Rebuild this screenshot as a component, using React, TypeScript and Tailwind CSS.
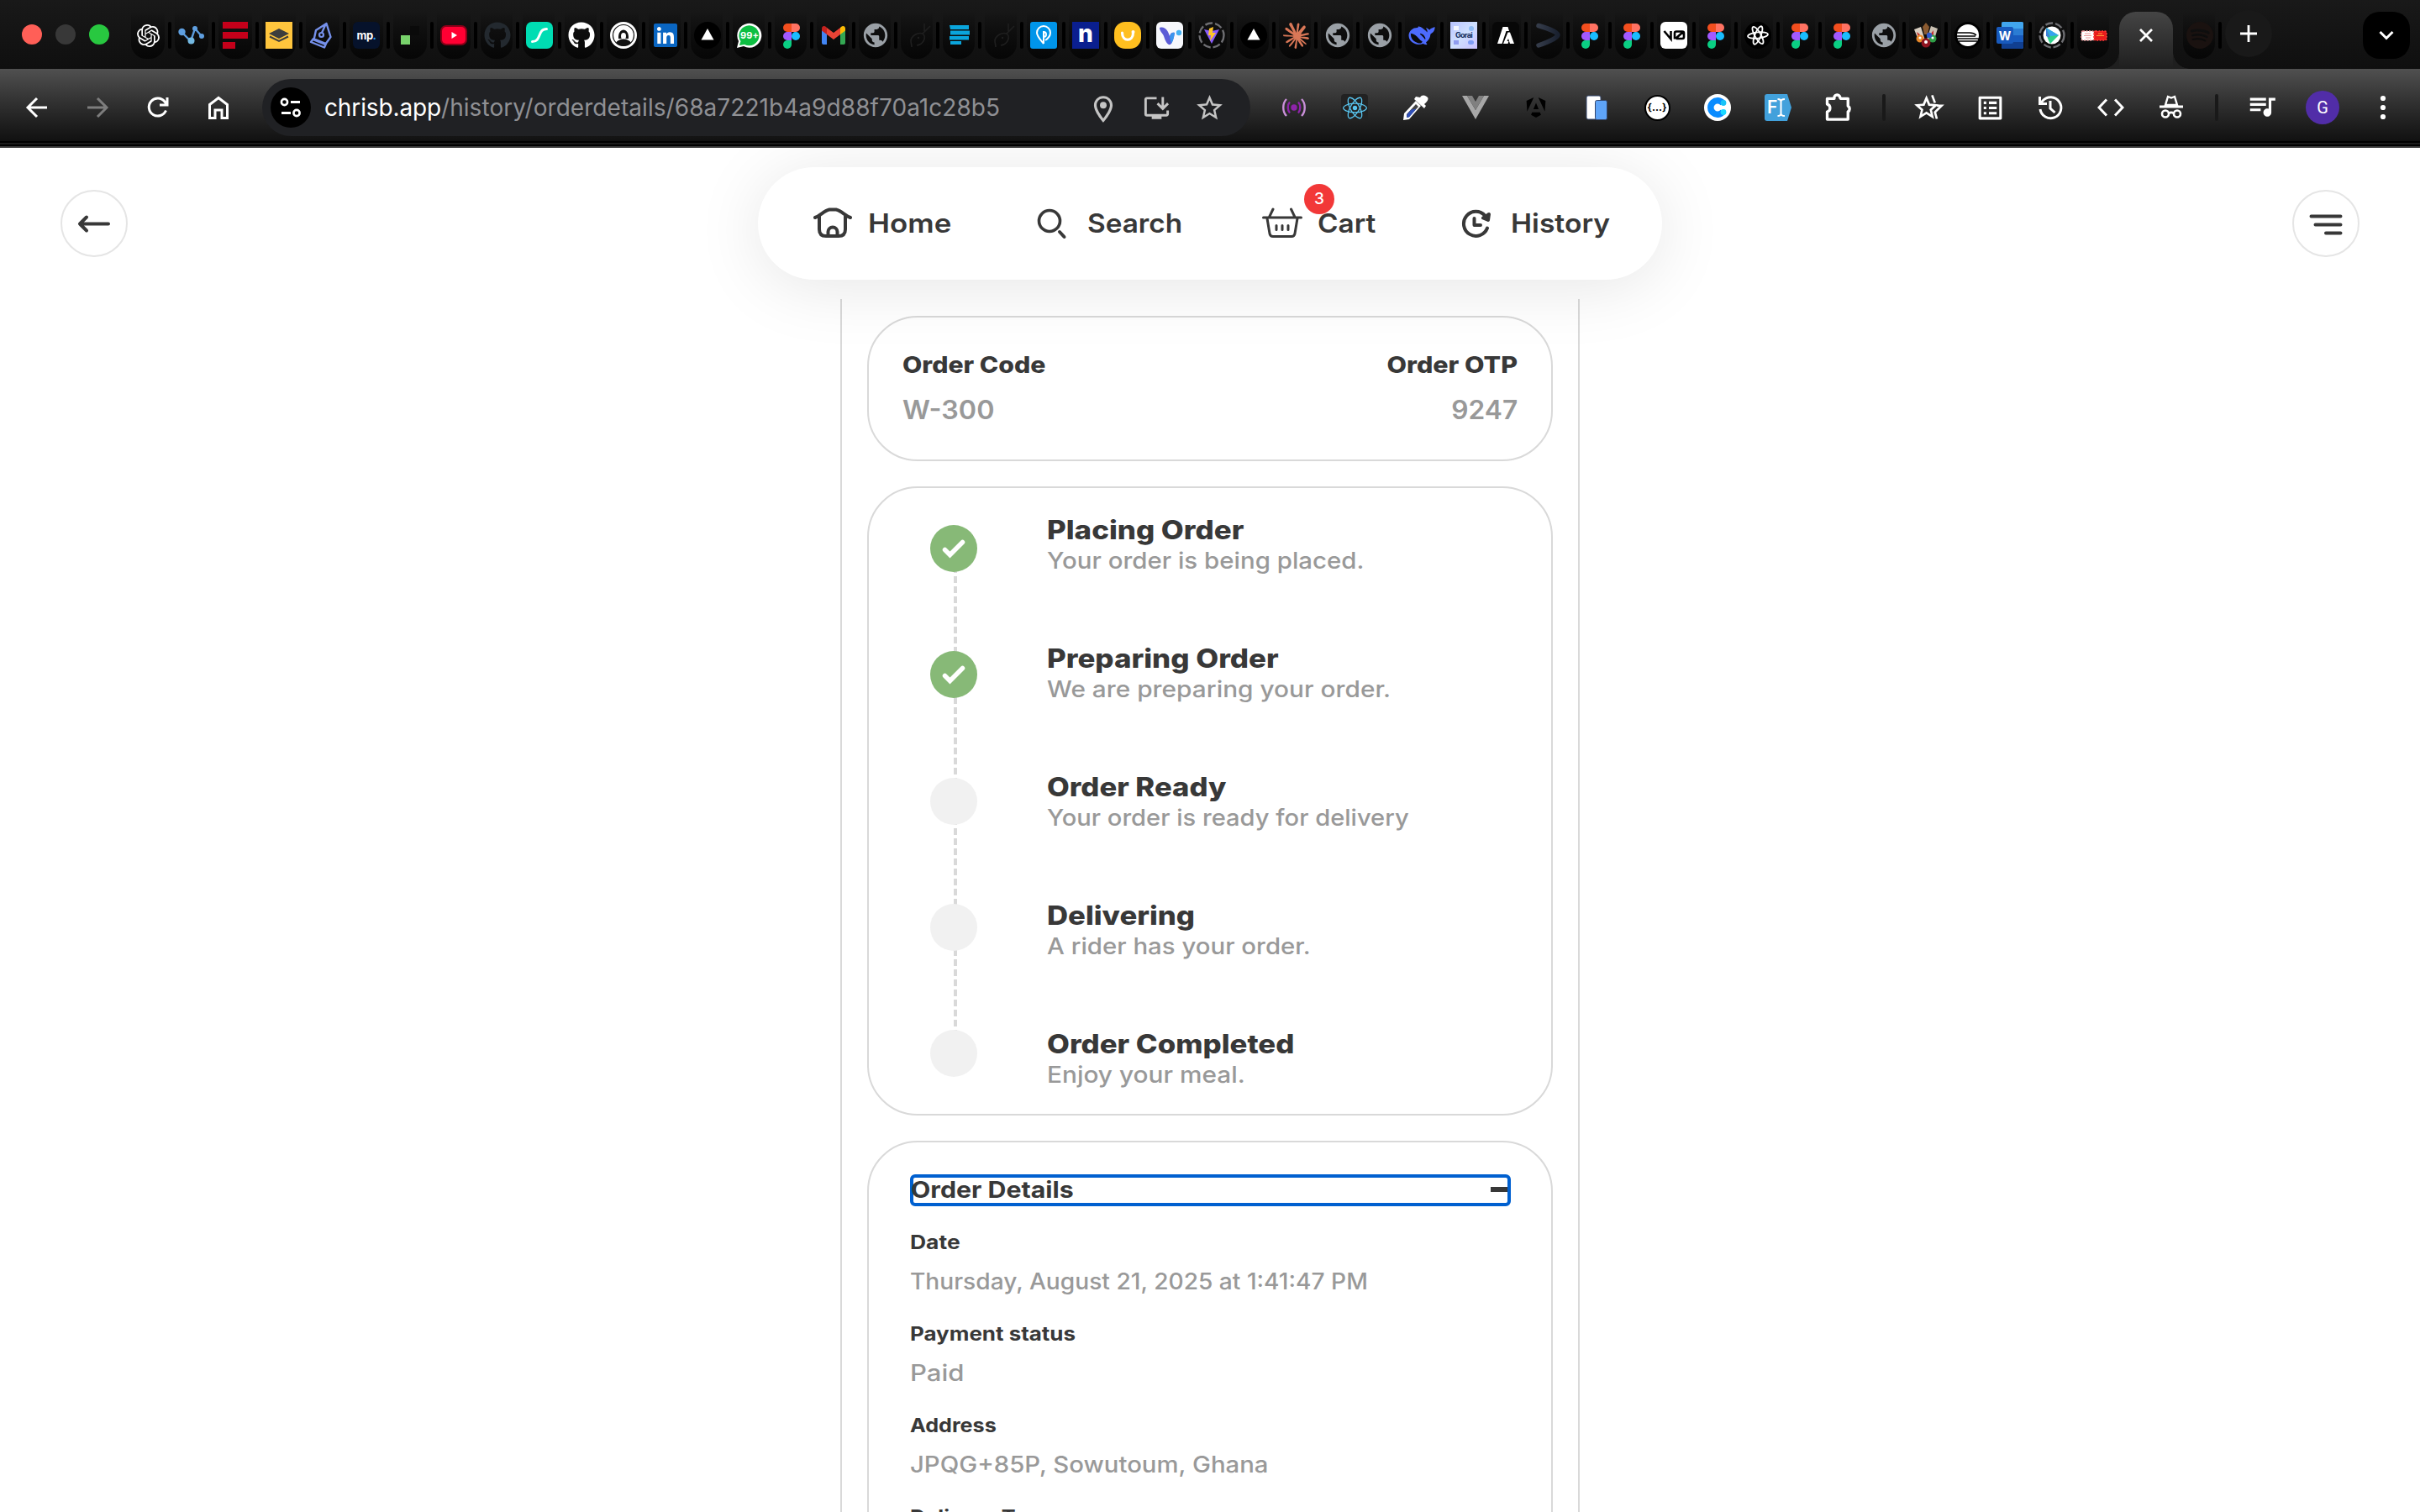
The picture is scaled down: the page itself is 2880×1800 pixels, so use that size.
import type { ReactNode } from "react";
import { SiOpenai, SiClaude, SiSpotify, SiAngular, SiReact } from "react-icons/si";
import { FaGithub, FaLinkedin } from "react-icons/fa";
import {
  MdOutlineListAlt,
  MdQueueMusic,
  MdOutlineLocationOn,
  MdOutlineInstallDesktop,
  MdOutlineStarBorder,
  MdPublic,
} from "react-icons/md";

/* ---------- favicons ---------- */

function Fav({ children }: { children: ReactNode }) {
  return (
    <svg viewBox="0 0 32 32" className="h-8 w-8 shrink-0" fill="none">
      {children}
    </svg>
  );
}

const Figma = () => (
  <Fav>
    <path d="M6 7a5 5 0 0 1 5-5h5v10h-5a5 5 0 0 1-5-5Z" fill="#f24e1e" />
    <path d="M16 2h5a5 5 0 0 1 0 10h-5Z" fill="#ff7262" />
    <path d="M6 17a5 5 0 0 1 5-5h5v10h-5a5 5 0 0 1-5-5Z" fill="#a259ff" />
    <circle cx="21" cy="17" r="5" fill="#1abcfe" />
    <path d="M6 27a5 5 0 0 1 5-5h5v5a5 5 0 0 1-10 0Z" fill="#0acf83" />
  </Fav>
);
const Globe = () => <MdPublic className="h-[34px] w-[34px] shrink-0 text-[#9aa0a6]" />;
const Triangle = () => (
  <Fav>
    <circle cx="16" cy="16" r="16" fill="#000" />
    <path d="M16 8l7.5 13.5h-15Z" fill="#fff" />
  </Fav>
);
const Rabbit = () => (
  <Fav>
    <path d="M24 2v9M31 5l-9 9M22 14c5 4 1 13-7 14M22 14c-6-2-14 3-14 9 0 2 1 4 1 7" stroke="#1f1f1f" strokeWidth="1.6" />
    <circle cx="17" cy="19" r="1.2" fill="#1f1f1f" />
  </Fav>
);
const Nodes = () => (
  <Fav>
    <path d="M4 12l11 11L20 8l8 9" stroke="#5b9bdc" strokeWidth="2.4" />
    <circle cx="4.5" cy="12" r="4.2" fill="#5f9fe0" />
    <circle cx="15.500" cy="22.500" r="4" fill="#74b9e2" />
    <circle cx="20" cy="8" r="3" fill="#5f9fe0" />
    <circle cx="28" cy="17" r="3" fill="#5f9fe0" />
  </Fav>
);
const RedBars = () => (
  <Fav>
    <path d="M1 0h30v8H1ZM1 12h30v8H1ZM1 24h15v8H1Z" fill="#c4001a" />
  </Fav>
);
const Layers = () => (
  <Fav>
    <path d="M0 0h32v32H0Z" fill="#ffc53d" />
    <path d="M16 8l12 6-12 6L4 14Z" fill="#3d3d3d" />
    <path d="M5 17.500l11 5.500 11-5.500" stroke="#3d3d3d" strokeWidth="2" />
  </Fav>
);
const Pen = () => (
  <Fav>
    <path d="M20.500 2L8 10 5.500 21.500 19 27l6.500-9ZM19.500 3l-4.500 10M2 24l3-4 15 6-2 4.500Z" stroke="#7590ea" strokeWidth="2.4" strokeLinejoin="round" />
    <circle cx="14.500" cy="15.500" r="2.500" stroke="#7590ea" strokeWidth="2.200" />
  </Fav>
);
const Mp = () => (
  <div className="relative flex h-8 w-8 items-center justify-center rounded-md bg-[#06122b] font-['Inter'] text-[13px] leading-none font-bold tracking-[-0.500px] text-white">
    mp<span className="text-[#1ea0ff]">.</span>
  </div>
);
const Pixels = () => (
  <Fav>
    <path d="M5 16h11v11H5Z" fill="#78d26b" />
    <path d="M16 5h11v11H16Z" fill="#0a0a0a" />
  </Fav>
);
const Youtube = () => (
  <Fav>
    <rect x="0" y="4" width="32" height="24" rx="7" fill="#8a0018" />
    <rect x="2" y="6" width="28" height="20" rx="5" fill="#ff0033" />
    <path d="M13.500 12v8l6.500-4Z" fill="#fff" />
  </Fav>
);
const Mint = () => (
  <Fav>
    <rect width="32" height="32" rx="7" fill="#00ddb3" />
    <path d="M7.500 23.500c11 0 6-15 17-15" stroke="#fff" strokeWidth="3" strokeLinecap="round" />
  </Fav>
);
const Portrait = () => (
  <Fav>
    <circle cx="16" cy="16" r="16" fill="#fff" />
    <circle cx="16" cy="16" r="12.500" stroke="#111" strokeWidth="1.200" />
    <path d="M10 20c-1-14 13-14 12 0Z" fill="#111" />
    <ellipse cx="16" cy="17" rx="3" ry="4" fill="#fff" />
    <path d="M7 25c3-6 15-6 18 0-5 5-13 5-18 0Z" fill="#111" />
  </Fav>
);
const Whatsapp = () => (
  <div className="relative flex h-8 w-8 items-center justify-center">
    <Fav>
      <path d="M1 31l2-8a14.500 14.500 0 1 1 6 6Z" fill="#fff" />
      <path d="M4 28l1.500-5a12 12 0 1 1 4.500 4Z" fill="#0dbf42" />
    </Fav>
    <span className="absolute inset-0 flex items-center justify-center font-['Inter'] text-[11px] font-bold text-white">99+</span>
  </div>
);
const Gmail = () => (
  <Fav>
    <path d="M2 8v17a2 2 0 0 0 2 2h4V13Z" fill="#4285f4" />
    <path d="M30 8v17a2 2 0 0 1-2 2h-4V13Z" fill="#34a853" />
    <path d="M24 7l-8 6-8-6v8l8 6 8-6Z" fill="#ea4335" />
    <path d="M2 8c0-3 3-4 5-2l1 1v8l-6-4.500Z" fill="#c5221f" />
    <path d="M30 8c0-3-3-4-5-2l-1 1v8l6-4.500Z" fill="#fbbc04" />
  </Fav>
);
const CyanBars = () => (
  <Fav>
    <path d="M4 4h23v5H5ZM5 10.500h23v5H5ZM4 17h23v4.500H4ZM5 23h13v4H5Z" fill="#0aa5dc" />
  </Fav>
);
const PinP = () => (
  <Fav>
    <rect width="32" height="32" rx="3" fill="#0095ea" />
    <path d="M16 26V12a3 3 0 1 1 0 6M16 26c-5-6-8-9-8-13a8 8 0 0 1 16 0c0 4-3 7-6 9" stroke="#fff" strokeWidth="2" />
  </Fav>
);
const LetterN = () => (
  <div className="flex h-8 w-8 items-center justify-center bg-[#0a1f8f] pb-1 font-['Inter'] text-[28px] leading-none font-extrabold text-white">n</div>
);
const Smile = () => (
  <Fav>
    <rect width="32" height="32" rx="13" fill="#ffbf1f" />
    <path d="M9.500 13c0 11 13 11 13 0" stroke="#fff" strokeWidth="3.200" strokeLinecap="round" />
    <circle cx="22.500" cy="12" r="2" fill="#fff" />
  </Fav>
);
const PurpleV = () => (
  <Fav>
    <rect width="32" height="32" rx="6" fill="#f7f8fc" />
    <path d="M4 7c7-2 10 4 12 10 1-4 3-5 6-4-1 7-3 12-5 14-4 1-6-4-8-10-1-3-5-6-5-10Z" fill="#5b5bd6" />
    <path d="M16 18c1-4 3-6 6-5-1 6-2 10-4 13Z" fill="#3b95ee" />
    <circle cx="27" cy="13" r="3.200" fill="#44b0f2" />
  </Fav>
);
const ViteDashed = () => (
  <Fav>
    <circle cx="16" cy="16" r="14.500" stroke="#6e6e72" strokeWidth="2.400" strokeDasharray="9 3" />
    <path d="M7 9l9 17 9-17-9 2Z" fill="#8a5cff" />
    <path d="M18 6l-5 2-1 8h3l-1 7 7-10h-4Z" fill="#ffc62b" />
  </Fav>
);
const Whale = () => (
  <Fav>
    <path
      d="M.5 16C1 10 6 6.500 11.500 7c-.5-1.500 1-2 3-1 2 1 6 4 8 6.500.5-2-.5-3.500-1.500-5.500 2 .5 3 2 4.500 2.500C27 7 29 7.500 31.500 6c.5 4-2 7-5 8.500-.5 5-3 8-5.500 10l1.500 2.500c-2 .5-4-.5-5-1C9 29 .5 24 .5 16Z"
      fill="#4d6bfe"
    />
    <path d="M3.500 14.500c0 5 3 8.500 7.500 10 3 1 5 .5 5-1-4-1-5-8-12.500-9ZM14 14.500c3 0 5 2.500 6 6" fill="#0a0a0a" stroke="#0a0a0a" strokeWidth="1.200" />
  </Fav>
);
const Gorai = () => (
  <div className="relative flex h-8 w-8 flex-col items-center justify-center bg-gradient-to-br from-[#b9c4ff] via-[#cfe0ff] to-[#c9c0ff] font-['Inter'] text-[9px] leading-none font-bold tracking-[-0.7px] text-[#15305f]">
    <span className="flex w-full justify-between px-1">
      <i className="h-[5px] w-[6px] bg-[#f3f6ff]" />
      <i className="h-[6px] w-[6px] rounded-full bg-[#8fbcf5]" />
    </span>
    <span>Gorai</span>
    <span className="mt-[2px] flex w-full justify-between px-1">
      <i className="h-[5px] w-[6px] bg-[#8f9cf0]" />
      <i className="h-[5px] w-[7px] rounded-full bg-[#7e9df5]" />
    </span>
  </div>
);
const Atlas = () => (
  <Fav>
    <rect width="32" height="32" rx="6" fill="#070707" />
    <path d="M6 26L12.500 6h6l1.500 5h-3.500L11.500 26Z" fill="#fff" />
    <path d="M18.500 12.500H21L26 26h-5l-2-6-1.500 3h2l-1 3h-5.500Z" fill="#fff" />
  </Fav>
);
const Chevron = () => (
  <Fav>
    <defs>
      <linearGradient id="chev" x1="0" x2="1">
        <stop stopColor="#343b49" />
        <stop offset="1" stopColor="#1a2130" />
      </linearGradient>
    </defs>
    <path d="M5 4.500c12 3.500 23 8 23 11S17 24 5 28" stroke="url(#chev)" strokeWidth="5.500" strokeLinecap="round" />
  </Fav>
);
const VZero = () => (
  <Fav>
    <rect width="32" height="32" rx="6" fill="#fff" />
    <path d="M4.500 11l8 9.500V11M17 20.500V13.500q0-2 2-2h7q2 0 2 2V18q0 2-2 2h-7M18 20l9-8" stroke="#000" strokeWidth="2.600" />
  </Fav>
);
const Atom = () => (
  <Fav>
    <circle cx="16" cy="16" r="16" fill="#000" />
    <g stroke="#fff" strokeWidth="1.800">
      <ellipse cx="16" cy="16" rx="3.600" ry="11.500" transform="rotate(22 16 16)" />
      <ellipse cx="16" cy="16" rx="3.600" ry="11.500" transform="rotate(-30 16 16)" />
      <ellipse cx="16" cy="16" rx="3.600" ry="12" transform="rotate(84 16 16)" />
    </g>
  </Fav>
);
const Cards = () => (
  <Fav>
    <path d="M2 9l8-3 5 16-7 2Z" fill="#d9cfc2" />
    <path d="M30 8l-8-3-5 16 8 3Z" fill="#c9c0b2" />
    <path d="M16 1l4 5-2 9h-4L12 6Z" fill="#8a5a30" />
    <path d="M5 12l4 3-2 3ZM25 10l-3 4 3 3Z" fill="#c22c2c" />
    <circle cx="9" cy="20" r="4.500" fill="#e8892a" />
    <circle cx="24" cy="20" r="4.500" fill="#2f9e48" />
    <circle cx="20" cy="16" r="3.200" fill="#2e58c7" />
    <circle cx="16" cy="25" r="5.500" fill="#8f1420" />
    <circle cx="16" cy="24" r="2" fill="#fff" />
    <circle cx="9" cy="19" r="1.600" fill="#fff" />
    <circle cx="24" cy="19" r="1.600" fill="#fff" />
  </Fav>
);
const Stripes = () => (
  <Fav>
    <circle cx="16" cy="16" r="16" fill="#000" />
    <circle cx="16" cy="16" r="13" fill="#fff" />
    <path d="M3 13h15c4 0 6 1 8 3M3 17h22M3 20h26M5 23h22" stroke="#000" strokeWidth="1.500" />
  </Fav>
);
const Word = () => (
  <div className="relative h-8 w-8">
    <Fav>
      <rect x="6" y="0" width="26" height="32" rx="2" fill="#2b7cd3" />
      <path d="M8 0h22a2 2 0 0 1 2 2v6H6V2a2 2 0 0 1 2-2Z" fill="#41a5ee" />
      <path d="M6 16h26v8H6Z" fill="#185abd" />
      <path d="M6 24h26v6a2 2 0 0 1-2 2H8a2 2 0 0 1-2-2Z" fill="#103f91" />
      <rect x="0" y="6" width="20" height="20" rx="2" fill="#185abd" />
    </Fav>
    <span className="absolute top-[6px] left-0 flex h-5 w-5 items-center justify-center font-['Inter'] text-[14px] font-bold text-white">W</span>
  </div>
);
const PlayDashed = () => (
  <Fav>
    <circle cx="16" cy="16" r="14.500" stroke="#6e6e72" strokeWidth="2.400" strokeDasharray="9 3" />
    <circle cx="16" cy="16" r="10.500" fill="#fff" />
    <path d="M9 7l15 9-10 10c-3-4-5-12-5-19Z" fill="#2fcf8a" />
    <path d="M9 7l15 9-10 1Z" fill="#36a3f0" />
    <path d="M9 7v10l5 2Z" fill="#3f7fd9" />
  </Fav>
);
const Stamps = () => (
  <Fav>
    <rect x="1" y="11" width="15" height="11" rx="2" fill="#fff" stroke="#f2a0a0" strokeWidth="1.500" strokeDasharray="2 1.500" />
    <path d="M5 14h7M4 16.500h9M6 19h6" stroke="#e99a9a" strokeWidth="1.200" />
    <rect x="16" y="11" width="15" height="11" rx="2" fill="#e81c1c" stroke="#ff3a3a" strokeWidth="1.500" strokeDasharray="2 1.500" />
    <path d="M21 14h5M19 16.500h9" stroke="#ff9a3a" strokeWidth="1.200" />
  </Fav>
);

const wideTabs: ReactNode[] = [
  <SiOpenai className="h-[27px] w-[27px] text-white" />,
  <Nodes />,
  <RedBars />,
  <Layers />,
  <Pen />,
  <Mp />,
  <Pixels />,
  <Youtube />,
];

const tabs: ReactNode[] = [
  <FaGithub className="h-8 w-8 text-[#23292f]" />,
  <Mint />,
  <FaGithub className="h-8 w-8 text-white" />,
  <Portrait />,
  <span className="flex h-[26px] w-[26px] items-center justify-center bg-white">
    <FaLinkedin className="h-8 w-8 shrink-0 text-[#0a66c2]" />
  </span>,
  <Triangle />,
  <Whatsapp />,
  <Figma />,
  <Gmail />,
  <Globe />,
  <Rabbit />,
  <CyanBars />,
  <Rabbit />,
  <PinP />,
  <LetterN />,
  <Smile />,
  <PurpleV />,
  <ViteDashed />,
  <Triangle />,
  <SiClaude className="h-[31px] w-[31px] text-[#d97757]" />,
  <Globe />,
  <Globe />,
  <Whale />,
  <Gorai />,
  <Atlas />,
  <Chevron />,
  <Figma />,
  <Figma />,
  <VZero />,
  <Figma />,
  <Atom />,
  <Figma />,
  <Figma />,
  <Globe />,
  <Cards />,
  <Stripes />,
  <Word />,
  <PlayDashed />,
  <Stamps />,
];

function Tab({ icon, wide, last }: { icon: ReactNode; wide?: boolean; last?: boolean }) {
  return (
    <div className="flex h-14 shrink-0 items-center">
      <div className={wide ? "flex w-12 justify-center" : "flex w-[46px] justify-center"}>
        <div
          className={
            (wide ? "w-10" : "w-[38px] pl-[2px]") +
            " flex h-14 items-center justify-center rounded-b-[18px] bg-gradient-to-b from-[#0c0c0c00] via-[#0d0d0d] to-[#060606]"
          }
        >
          {icon}
        </div>
      </div>
      <span className={last ? "h-8 w-1" : "h-8 w-1 rounded-sm bg-black"} />
    </div>
  );
}

function TabStrip() {
  return (
    <div className="flex h-[82px] items-start overflow-hidden bg-gradient-to-b from-[#191919] to-[#0f0f0f] pt-[14px] pr-3 pl-[26px]">
      <div className="flex h-[54px] shrink-0 items-center gap-4">
        <span className="h-6 w-6 rounded-full bg-[#ff5f57]" />
        <span className="h-6 w-6 rounded-full bg-[#383838]" />
        <span className="h-6 w-6 rounded-full bg-[#28c840]" />
      </div>
      <div className="ml-[22px] flex">
        {wideTabs.map((icon, i) => (
          <Tab key={i} icon={icon} wide />
        ))}
        {tabs.map((icon, i) => (
          <Tab key={i} icon={icon} last={i === tabs.length - 1} />
        ))}
      </div>
      <div className="relative ml-1 flex h-[68px] w-16 shrink-0 justify-center rounded-t-[20px] bg-gradient-to-b from-[#454545] to-[#1f1f1f] pt-[13px]">
        <span className="absolute bottom-0 -left-5 h-5 w-5 bg-[radial-gradient(circle_at_0_0,transparent_19.5px,#1f1f1f_20px)]" />
        <span className="absolute -right-5 bottom-0 h-5 w-5 bg-[radial-gradient(circle_at_100%_0,transparent_19.5px,#1f1f1f_20px)]" />
        <svg viewBox="0 0 30 30" className="h-[30px] w-[30px]" fill="none" stroke="#fff" strokeWidth="2.800">
          <path d="M8 8l14 14M22 8L8 22" />
        </svg>
      </div>
      <div className="ml-2 flex">
        <Tab icon={<SiSpotify className="h-8 w-8 text-[#1a1210]" />} />
      </div>
      <div className="ml-1 -mt-[2px] flex h-14 w-14 shrink-0 items-center justify-center rounded-full bg-[#191919]">
        <svg viewBox="0 0 24 24" className="h-6 w-6" stroke="#fff" strokeWidth="2.800">
          <path d="M12 2v20M2 12h20" />
        </svg>
      </div>
      <div className="ml-auto flex h-14 w-14 shrink-0 items-center justify-center rounded-[20px] bg-black">
        <svg viewBox="0 0 24 24" className="h-6 w-6" fill="none" stroke="#fff" strokeWidth="3">
          <path d="M4.500 8l7.500 7.500L19.500 8" />
        </svg>
      </div>
    </div>
  );
}

/* ---------- toolbar ---------- */

function Slot({ children }: { children: ReactNode }) {
  return <div className="flex w-[72px] shrink-0 items-center justify-center text-white">{children}</div>;
}

function Glyph({ children, className = "h-8 w-8" }: { children: ReactNode; className?: string }) {
  return (
    <svg viewBox="0 0 32 32" className={className} fill="none" stroke="currentColor" strokeWidth="3">
      {children}
    </svg>
  );
}

const Divider = () => (
  <div className="flex w-9 shrink-0 items-center justify-center">
    <span className="h-8 w-1 rounded-sm bg-[#191919]" />
  </div>
);

function Toolbar() {
  return (
    <div className="flex h-[86px] items-center bg-gradient-to-b from-[#505050] to-[#111111] pt-[6px] pl-2">
      <Slot>
        <Glyph>
          <path d="M28 16H6M16 5L5 16l11 11" />
        </Glyph>
      </Slot>
      <Slot>
        <Glyph className="h-8 w-8 text-[#7d7d7d]">
          <path d="M4 16h22M16 5l11 11-11 11" />
        </Glyph>
      </Slot>
      <Slot>
        <Glyph>
          <path d="M25.500 19.500A10.500 10.500 0 1 1 24 9l2 3M27 4v9h-9" />
        </Glyph>
      </Slot>
      <Slot>
        <Glyph>
          <path d="M5.500 12.500L16 4.500l10.500 8V28.500H20V19h-8v9.500H5.500Z" />
        </Glyph>
      </Slot>
      <div className="ml-4 flex h-[68px] w-[1176px] shrink-0 items-center rounded-full bg-[#202124] pl-[10px] text-[#c4c4c4]">
        <div className="flex h-12 w-12 items-center justify-center rounded-full bg-black text-white">
          <Glyph>
            <circle cx="8.500" cy="9.500" r="3.600" strokeWidth="2.600" />
            <circle cx="23" cy="22.500" r="3.600" strokeWidth="2.600" />
            <path d="M16 9.500h11M5 22.500h11" />
          </Glyph>
        </div>
        <div className="ml-4 font-['Inter'] text-[28px] leading-9 whitespace-nowrap">
          <span className="tracking-[-0.13px] text-white">chrisb.app</span>
          <span className="tracking-[0.06px] text-[#8f9094]">/history/orderdetails/68a7221b4a9d88f70a1c28b5</span>
        </div>
        <div className="mr-[30px] ml-auto flex items-center gap-[27px]">
          <MdOutlineLocationOn className="mt-1 h-[38px] w-[38px]" />
          <MdOutlineInstallDesktop className="h-[35px] w-[35px]" />
          <MdOutlineStarBorder className="h-[37px] w-[37px]" />
        </div>
      </div>
      <div className="ml-4 flex">
        <Slot>
          <Glyph>
            <g stroke="#8e24aa">
              <circle cx="16" cy="16" r="2.200" fill="#8e24aa" />
              <path d="M11 9.500c-3 3-3 10 0 13M21 9.500c3 3 3 10 0 13" strokeWidth="2.400" />
              <path d="M7 6c-5 5-5 15 0 20M25 6c5 5 5 15 0 20" stroke="#c98fd8" strokeWidth="2.400" />
            </g>
          </Glyph>
        </Slot>
        <Slot>
          <div className="flex h-8 w-8 items-center justify-center rounded bg-[#222]">
            <SiReact className="h-[29px] w-[29px] text-[#58c4ee]" />
          </div>
        </Slot>
        <Slot>
          <Glyph>
            <path d="M2 31l1-8L17 8l6 6L9 30Z" fill="#fff" stroke="none" />
            <path d="M6 24L17 12l3 3L9 27l-3 1Z" fill="#444" stroke="none" />
            <path d="M6.500 24l5-5.500 6-1L9 27.500l-3 .5Z" fill="#3050b8" stroke="none" />
            <path d="M15 6l12 11 2-3-2-2c5-4 5-7 4-8s-6-5-9 0l-5-1Z" fill="#fff" stroke="none" />
          </Glyph>
        </Slot>
        <Slot>
          <Glyph>
            <path d="M0 2h6l10 17L26 2h6L16 30Z" fill="#a8a8a8" stroke="none" />
            <path d="M6 2h6l4 7 4-7h6L16 19Z" fill="#808080" stroke="none" />
          </Glyph>
        </Slot>
        <Slot>
          <SiAngular className="h-6 w-6 text-black" />
        </Slot>
        <Slot>
          <Glyph>
            <rect x="4" y="2" width="17" height="28" rx="2" fill="#fff" stroke="#33456b" strokeWidth="1" />
            <rect x="14.500" y="7.500" width="14" height="23" rx="2" fill="#5ea4f8" stroke="#33456b" strokeWidth="1" />
          </Glyph>
        </Slot>
        <Slot>
          <div className="flex h-[31px] w-[31px] items-center justify-center rounded-full border-2 border-black bg-white font-['Inter'] text-[12px] leading-none font-bold text-black">
            {"{...}"}
          </div>
        </Slot>
        <Slot>
          <Glyph>
            <circle cx="16" cy="16" r="16" fill="#fff" stroke="none" />
            <path d="M22.500 11a8.200 8.200 0 1 0 0 10" stroke="#0a8cff" strokeWidth="7.500" />
            <circle cx="23" cy="10.500" r="3.400" fill="#19c3f7" stroke="none" />
            <circle cx="23" cy="21.500" r="3.400" fill="#19d8ff" stroke="none" />
          </Glyph>
        </Slot>
        <Slot>
          <div className="relative h-8 w-8">
            <Glyph>
              <path d="M3 0h24l5 16-5 16H3a3 3 0 0 1-3-3V3a3 3 0 0 1 3-3Z" fill="#42a1dc" stroke="none" />
              <path d="M15.500 6c3 0 4 1 4 3v14c0 2-1 3-4 3M24 6c-3 0-4.500 1-4.500 3v14c0 2 1.500 3 4.500 3" stroke="#fff" strokeWidth="2" />
            </Glyph>
            <span className="absolute top-0 left-[3px] font-['Inter'] text-[21px] leading-8 font-semibold text-white">F</span>
          </div>
        </Slot>
        <Slot>
          <Glyph className="h-9 w-9">
            <path d="M4 6.500h7.500a3 3 0 0 1 6-1.500l.5 1.500H26v8a3.500 3.500 0 0 1 0 6v8H4v-8c4-1 4-7 0-8Z" strokeLinejoin="round" />
          </Glyph>
        </Slot>
      </div>
      <Divider />
      <Slot>
        <Glyph className="h-9 w-9">
          <path d="M13 6l2.900 7 7.100.6-5.400 4.800 1.700 7.200-6.300-3.900-6.300 3.900 1.700-7.200L3 13.600 10.100 13ZM19 3l3 8M24 28l-2-7 7-7h-5" strokeWidth="2.400" />
        </Glyph>
      </Slot>
      <Slot>
        <MdOutlineListAlt className="h-[37px] w-[37px]" />
      </Slot>
      <Slot>
        <Glyph>
          <path d="M4 18A12.500 12.500 0 1 0 7 8L4 11M3.500 3v8.500H12M16 8v9l5.500 5" />
        </Glyph>
      </Slot>
      <Slot>
        <Glyph>
          <path d="M11 6.500L2 16l9 9.500M21 6.500L30 16l-9 9.500" />
        </Glyph>
      </Slot>
      <Slot>
        <Glyph>
          <path d="M9 13l3-10 4 1.500L20 3l3 10Z" strokeWidth="2.400" />
          <path d="M2 15h28" />
          <circle cx="9" cy="23.500" r="4" strokeWidth="2.600" />
          <circle cx="23" cy="23.500" r="4" strokeWidth="2.600" />
          <path d="M13 23c2-1.500 4-1.500 6 0" strokeWidth="2.600" />
        </Glyph>
      </Slot>
      <Divider />
      <Slot>
        <MdQueueMusic className="-mt-1 h-[38px] w-[38px]" />
      </Slot>
      <Slot>
        <div className="flex h-10 w-10 items-center justify-center rounded-full bg-[#512da8] font-['Roboto'] text-[20px]">G</div>
      </Slot>
      <Slot>
        <Glyph>
          <g fill="currentColor" stroke="none">
            <circle cx="16" cy="5" r="3.100" />
            <circle cx="16" cy="16" r="3.100" />
            <circle cx="16" cy="27" r="3.100" />
          </g>
        </Glyph>
      </Slot>
    </div>
  );
}

/* ---------- page header ---------- */

function NavIcon({ children }: { children: ReactNode }) {
  return (
    <svg
      viewBox="0 0 48 48"
      className="h-12 w-12 shrink-0"
      fill="none"
      stroke="#383838"
      strokeWidth="4"
      strokeLinecap="round"
      strokeLinejoin="round"
    >
      {children}
    </svg>
  );
}

function Header() {
  return (
    <header className="relative z-10 flex h-[180px] shrink-0 items-center justify-between px-[72px]">
      <button className="flex h-20 w-20 items-center justify-center rounded-full border-2 border-[#e5e5e5] bg-white">
        <svg viewBox="0 0 40 24" className="h-6 w-10" fill="none" stroke="#383838" strokeWidth="4" strokeLinecap="round" strokeLinejoin="round">
          <path d="M37 12.500H3M11 4.500l-8 8 8 8" />
        </svg>
      </button>
      <nav className="flex h-[134px] w-[1076px] items-center rounded-full bg-white pl-[65px] text-[31px] leading-10 font-semibold text-[#383838] shadow-[0_8px_80px_rgba(0,0,0,0.1)]">
        <a className="flex w-[261px] items-center gap-[18px]">
          <NavIcon>
            <path d="M3 17C10 14.500 13 9 20 7.500h8C35 9 38 14.500 45 17M8 15.500V31q0 8 8 8h15q8 0 8-8V15.500M18.500 38.500V34a5.500 5.500 0 0 1 11 0v4.500" />
          </NavIcon>
          <span className="inline-block origin-left scale-x-[1.125]">Home</span>
        </a>
        <a className="flex w-[274px] items-center gap-[18px]">
          <NavIcon>
            <circle cx="21" cy="21" r="12.500" strokeWidth="3.600" />
            <path d="M33 34l5.500 6" />
          </NavIcon>
          <span className="inline-block origin-left scale-x-[1.075]">Search</span>
        </a>
        <a className="relative flex w-[230px] items-center gap-[18px]">
          <NavIcon>
            <path d="M1.500 17h45M13 7L8.500 16.500M34.500 7L39 16.500M6 18l3 18q.5 3.500 4 3.500h22q3.500 0 4-3.500l3-18" strokeWidth="3" />
            <path d="M17 26.500v5M24 26.500v5M31 26.500v5" strokeWidth="3" />
          </NavIcon>
          <span className="inline-block origin-left scale-x-[1.076]">Cart</span>
          <span className="absolute -top-[23px] left-[50px] flex h-9 w-9 items-center justify-center rounded-full bg-[#f23838] text-[19px] font-medium text-white">
            3
          </span>
        </a>
        <a className="flex items-center gap-[18px]">
          <NavIcon>
            <path d="M38 29.500A14.500 14.500 0 1 1 35.500 15M22.500 18v8h7.500" />
            <path d="M33 17.500l7-4.500-1 7Z" fill="#383838" />
          </NavIcon>
          <span className="inline-block origin-left scale-x-[1.085]">History</span>
        </a>
      </nav>
      <button className="flex h-20 w-20 items-center justify-center rounded-full border-2 border-[#e5e5e5] bg-white">
        <svg viewBox="0 0 40 28" className="h-7 w-10" fill="none" stroke="#383838" strokeWidth="4" strokeLinecap="round">
          <path d="M2.500 5.500h35M7.500 15.500h30M20 25.500h17.500" />
        </svg>
      </button>
    </header>
  );
}

/* ---------- order content ---------- */

const steps = [
  { title: "Placing Order", titleCls: "scale-x-[1.125]", text: "Your order is being placed.", textCls: "scale-x-[1.09]", done: true },
  { title: "Preparing Order", titleCls: "scale-x-[1.125]", text: "We are preparing your order.", textCls: "scale-x-[1.104]", done: true },
  { title: "Order Ready", titleCls: "scale-x-[1.117]", text: "Your order is ready for delivery", textCls: "scale-x-[1.078]", done: false },
  { title: "Delivering", titleCls: "scale-x-[1.12]", text: "A rider has your order.", textCls: "scale-x-[1.088]", done: false },
  { title: "Order Completed", titleCls: "scale-x-[1.122]", text: "Enjoy your meal.", textCls: "scale-x-[1.104]", done: false },
];

const details = [
  { label: "Date", labelCls: "scale-x-[1.15]", value: "Thursday, August 21, 2025 at 1:41:47 PM", valueCls: "scale-x-[1.042]" },
  { label: "Payment status", labelCls: "scale-x-[1.128]", value: "Paid", valueCls: "scale-x-[1.15]" },
  { label: "Address", labelCls: "scale-x-[1.095]", value: "JPQG+85P, Sowutoum, Ghana", valueCls: "scale-x-[1.086]" },
  { label: "Delivery Type", labelCls: "scale-x-[1.1]", value: "", valueCls: "" },
];

function OrderCodes() {
  return (
    <section className="flex h-[173px] shrink-0 justify-between rounded-[60px] border-2 border-[#d9d9d9] pt-[37px] pr-10 pl-10">
      <div className="flex flex-col items-start gap-[13px] leading-10">
        <h2 className="origin-left scale-x-[1.118] text-[27px] font-extrabold text-[#383838]">Order Code</h2>
        <p className="origin-left scale-x-[1.042] text-[31px] font-semibold text-[#999999]">W-300</p>
      </div>
      <div className="flex flex-col items-end gap-[13px] leading-10">
        <h2 className="origin-right scale-x-[1.127] text-[27px] font-extrabold text-[#383838]">Order OTP</h2>
        <p className="origin-right scale-x-[1.022] text-[31px] font-semibold text-[#999999]">9247</p>
      </div>
    </section>
  );
}

function Progress() {
  return (
    <section className="flex h-[749px] shrink-0 rounded-[60px] border-2 border-[#d9d9d9] pl-[73px]">
      <div className="mt-11 flex h-[657px] w-14 flex-col justify-between bg-[repeating-linear-gradient(to_bottom,#d9d9d9_0px,#d9d9d9_8px,transparent_8px,transparent_12px)] bg-[length:4px_620px] bg-[position:28px_1px] bg-no-repeat">
        {steps.map((s) =>
          s.done ? (
            <span key={s.title} className="flex h-14 w-14 items-center justify-center rounded-full bg-[#87b977]">
              <svg viewBox="0 0 28 24" className="h-6 w-7" fill="none" stroke="#fff" strokeWidth="5.500" strokeLinecap="round">
                <path d="M3.500 13.500l6 6L24.500 4.500" />
              </svg>
            </span>
          ) : (
            <span key={s.title} className="h-14 w-14 rounded-full bg-[#f1f1f1]" />
          ),
        )}
      </div>
      <div className="mt-[31px] ml-[83px] flex flex-col gap-[79px] leading-[37px]">
        {steps.map((s) => (
          <div key={s.title} className="flex flex-col items-start">
            <h3 className={"origin-left text-[31px] font-extrabold text-[#383838] " + s.titleCls}>{s.title}</h3>
            <p className={"origin-left text-[27px] font-medium text-[#999999] " + s.textCls}>{s.text}</p>
          </div>
        ))}
      </div>
    </section>
  );
}

function OrderDetails() {
  return (
    <section className="h-[800px] shrink-0 rounded-[60px] border-2 border-[#d9d9d9] pt-10 pr-[50px] pl-[49px]">
      <button className="ml-[2px] flex h-[34px] w-[711px] items-center justify-between rounded-[4px] outline-4 -outline-offset-2 outline-[#0060d0]">
        <span className="-ml-px origin-left scale-x-[1.122] text-[27px] leading-[34px] font-bold text-[#383838]">Order Details</span>
        <span className="mt-[-2px] h-[6px] w-[22px] bg-[#383838]" />
      </button>
      <dl className="mt-[31px] flex flex-col gap-[30px]">
        {details.map((d) => (
          <div key={d.label} className="flex flex-col items-start">
            <dt className={"origin-left text-[23px] leading-7 font-bold text-[#383838] " + d.labelCls}>{d.label}</dt>
            {d.value && (
              <dd className={"mt-[15px] origin-left text-[27px] leading-9 font-medium text-[#999999] " + d.valueCls}>{d.value}</dd>
            )}
          </div>
        ))}
      </dl>
    </section>
  );
}

export default function App() {
  return (
    <div className="flex h-[1800px] w-[2880px] flex-col overflow-hidden bg-white font-['Inter',sans-serif]">
      <TabStrip />
      <Toolbar />
      <div className="h-2 shrink-0 border-y-2 border-t-black border-b-[#3a3a3a] bg-gradient-to-b from-[#1c1c1c] from-50% to-black to-50%" />
      <main className="flex h-[1624px] flex-col overflow-hidden">
        <Header />
        <div className="mx-auto flex w-[880px] grow flex-col gap-[30px] overflow-hidden border-x-2 border-[#d9d9d9] px-[30px] pt-5">
          <OrderCodes />
          <Progress />
          <OrderDetails />
        </div>
      </main>
    </div>
  );
}
